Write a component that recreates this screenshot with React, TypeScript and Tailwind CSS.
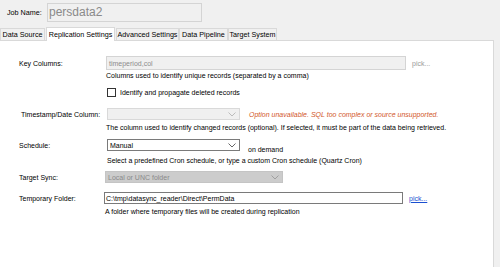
import React from "react";

const Chevron = ({ color }: { color: string }) => (
  <svg width="8" height="5" viewBox="0 0 8 5" className="shrink-0">
    <polyline points="0.5,0.5 4,4 7.5,0.5" fill="none" stroke={color} strokeWidth="0.9" />
  </svg>
);

const Label = ({ children }: { children: React.ReactNode }) => (
  <div className="w-[87px] shrink-0 pl-[19px] whitespace-nowrap">{children}</div>
);

const tabs = ["Data Source", "Replication Settings", "Advanced Settings", "Data Pipeline", "Target System"];

const App = () => {
  return (
    <div className="w-[500px] h-[267px] overflow-hidden bg-[#f0f0f0] font-['Liberation_Sans',Arial,sans-serif] text-[7px] leading-[9px] text-black">
      {/* job name */}
      <div className="flex items-center h-[25px] pl-[7px] pb-[1px]">
        <span className="w-[40px] text-[7.2px]">Job Name:</span>
        <div className="w-[155px] h-[19px] border border-[#d4d4d4] bg-[#f0f0f0] flex items-center pl-[1px] text-[12px] leading-[14px] text-[#8a8a8a]">
          persdata2
        </div>
      </div>

      {/* tabs */}
      <div className="flex items-end h-[15px] text-[7.2px]">
        {tabs.map((t, i) =>
          i === 1 ? (
            <div
              key={t}
              className="h-[14px] w-[69px] bg-white border border-b-0 border-[#d9d9d9] flex items-center justify-center relative top-[1px] z-10 mx-[1px]"
            >
              {t}
            </div>
          ) : (
            <div
              key={t}
              className={`h-[12px] border border-b-0 border-[#d9d9d9] bg-[#f0f0f0] flex items-center justify-center ${
                ["w-[45px]", "", "w-[63px]", "w-[49px]", "w-[49px]"][i]
              }`}
            >
              {t}
            </div>
          )
        )}
      </div>

      {/* panel */}
      <div className="w-[494px] h-[227px] bg-white border-t border-r border-[#d9d9d9] pt-[15px]">
        {/* key columns */}
        <div className="flex items-center h-[14px]">
          <Label>Key Columns:</Label>
          <div className="ml-[19px] w-[300px] h-[14px] bg-[#f0f0f0] border border-[#d4d4d4] flex items-center pl-[2px] text-[#8c8c8c]">
            timeperiod,col
          </div>
          <span className="ml-[6px] text-[#9a9a9a]">pick...</span>
        </div>
        <div className="flex mt-[1px]">
          <Label>{""}</Label>
          <span className="ml-[19px]">Columns used to identify unique records (separated by a comma)</span>
        </div>

        {/* checkbox */}
        <div className="flex items-center mt-[8px] h-[9px]">
          <Label>{""}</Label>
          <div className="ml-[20px] w-[9px] h-[9px] border border-[#333] bg-white" />
          <span className="ml-[4px]">Identify and propagate deleted records</span>
        </div>

        {/* timestamp */}
        <div className="flex items-center mt-[11px] h-[12px]">
          <Label>
            <span className="pl-[2px]">Timestamp/Date Column:</span>
          </Label>
          <div className="ml-[20px] w-[133px] h-[12px] bg-[#f0f0f0] border border-[#d9d9d9] flex items-center justify-end pr-[3px]">
            <Chevron color="#b5b5b5" />
          </div>
          <span className="ml-[9px] italic text-[#d2572a]">
            Option unavailable. SQL too complex or source unsupported.
          </span>
        </div>
        <div className="flex mt-[3px]">
          <Label>{""}</Label>
          <span className="ml-[19px]">
            The column used to identify changed records (optional). If selected, it must be part of the data being
            retrieved.
          </span>
        </div>

        {/* schedule */}
        <div className="flex items-center mt-[7px] h-[12px]">
          <Label>Schedule:</Label>
          <div className="ml-[20px] w-[133px] h-[12px] bg-white border border-[#7a7a7a] flex items-center justify-between pl-[2px] pr-[3px]">
            <span>Manual</span>
            <Chevron color="#555" />
          </div>
          <span className="ml-[8px] relative top-[4px]">on demand</span>
        </div>
        <div className="flex mt-[5px]">
          <Label>{""}</Label>
          <span className="ml-[20px]">
            Select a predefined Cron schedule, or type a custom Cron schedule (Quartz Cron)
          </span>
        </div>

        {/* target sync */}
        <div className="flex items-center mt-[6px] h-[12px]">
          <Label>Target Sync:</Label>
          <div className="ml-[18px] w-[178px] h-[12px] bg-[#cccccc] border border-[#c4c4c4] flex items-center justify-between pl-[2px] pr-[3px] text-[#8a8a8a]">
            <span>Local or UNC folder</span>
            <Chevron color="#9a9a9a" />
          </div>
        </div>

        {/* temporary folder */}
        <div className="flex items-center mt-[9px] h-[12px]">
          <Label>Temporary Folder:</Label>
          <div className="ml-[17px] w-[299px] h-[12px] bg-white border border-[#7a7a7a] flex items-center pl-[1px]">
            C:\tmp\datasync_reader\Direct\PermData
          </div>
          <span className="ml-[6px] text-[#1a4fd0] underline">pick...</span>
        </div>
        <div className="flex mt-[3px]">
          <Label>{""}</Label>
          <span className="ml-[18px]">A folder where temporary files will be created during replication</span>
        </div>
      </div>
    </div>
  );
};

export default App;
